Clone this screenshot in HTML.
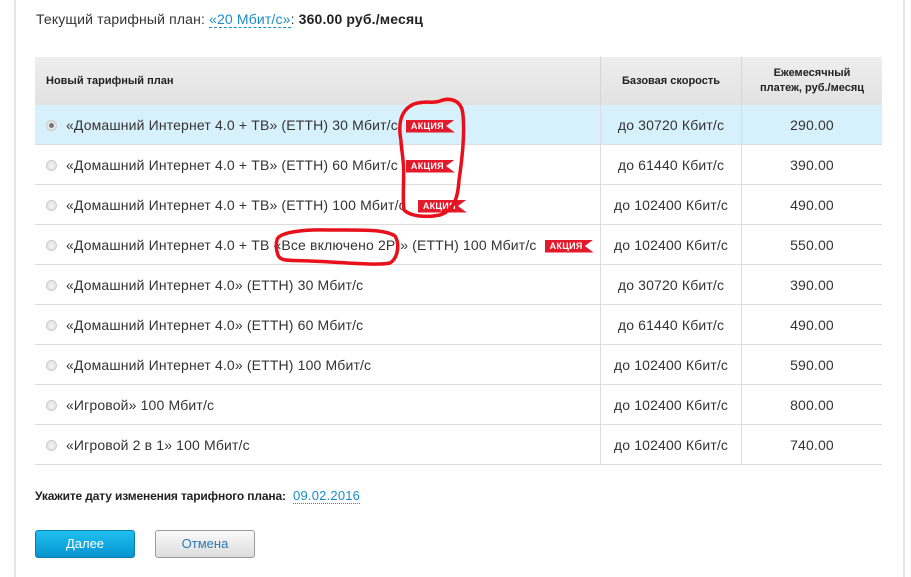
<!DOCTYPE html>
<html><head><meta charset="utf-8"><style>
body{margin:0;width:911px;height:577px;background:#fff;font-family:"Liberation Sans",sans-serif;position:relative;overflow:hidden;color:#333}
.vl{position:absolute;left:14px;top:0;width:2px;height:577px;background:#e6e6e6}
.vr{position:absolute;left:903px;top:0;width:2px;height:577px;background:#e6e6e6}
.top{position:absolute;left:36px;top:11px;font-size:14px;color:#333;letter-spacing:0.15px}
.top a{color:#1a8ccc;border-bottom:1px dashed #1a8ccc;text-decoration:none}
table{position:absolute;left:35px;top:57px;border-collapse:collapse;width:847px}
th{background:linear-gradient(#eee,#e2e2e2);font-size:11px;font-weight:bold;color:#222;height:48px;border-right:1px solid #d6d6d6;padding:0;line-height:15px}
th:last-child{border-right:none}
td{height:39px;border-bottom:1px solid #ddd;border-right:1px solid #ddd;font-size:14px;padding:0;color:#333;letter-spacing:0.15px}
td:last-child{border-right:none}
tr.sel td{background:#d7f1fc}
td.n{padding-left:11px;white-space:nowrap}
td.c{text-align:center}
.r{display:inline-block;width:11px;height:11px;border-radius:50%;background:radial-gradient(#f4f4f4,#ddd);border:1px solid #ccc;vertical-align:-1px;margin-right:9px;box-sizing:border-box;position:relative}
.sel .r::after{content:"";position:absolute;left:2px;top:2px;width:5px;height:5px;border-radius:50%;background:#777}
.ak{display:inline-block;background:#e3192c;color:#fff;font-size:9px;font-weight:bold;height:13px;line-height:13px;padding:0 11px 0 5px;vertical-align:1px;letter-spacing:0.3px;clip-path:polygon(0 0,100% 0,82% 50%,100% 100%,0 100%)}
.date{position:absolute;left:35px;top:488px;font-size:12px;font-weight:bold;color:#222;letter-spacing:-0.15px}
.date a{font-weight:normal;color:#1a8ccc;border-bottom:1px dotted #1a8ccc;margin-left:4px;font-size:13px;letter-spacing:0.2px}
.b1{position:absolute;left:35px;top:530px;width:98px;height:26px;border:1px solid #0a7bb0;border-radius:3px;background:linear-gradient(#1fc0ef,#0694cf);color:#fff;font-size:13px;text-align:center;line-height:26px}
.b2{position:absolute;left:155px;top:530px;width:98px;height:26px;border:1px solid #999;border-radius:3px;background:linear-gradient(#fafafa,#ddd);color:#2a7ab0;font-size:13px;text-align:center;line-height:26px}
svg{position:absolute;left:0;top:0}
</style></head><body>
<div class="vl"></div><div class="vr"></div>
<div class="top">Текущий тарифный план: <a>«20 Мбит/с»</a>: <b style="color:#222">360.00 руб./месяц</b></div>
<table>
<tr><th style="text-align:left;padding-left:11px;width:554px">Новый тарифный план</th><th style="width:140px">Базовая скорость</th><th>Ежемесячный<br>платеж, руб./месяц</th></tr>
<tr class="sel"><td class="n"><span class="r"></span>«Домашний Интернет 4.0 + ТВ» (ЕТТН) 30 Мбит/с <span class="ak" style="margin-left:4px">АКЦИЯ</span></td><td class="c">до 30720 Кбит/с</td><td class="c">290.00</td></tr>
<tr><td class="n"><span class="r"></span>«Домашний Интернет 4.0 + ТВ» (ЕТТН) 60 Мбит/с <span class="ak" style="margin-left:4px">АКЦИЯ</span></td><td class="c">до 61440 Кбит/с</td><td class="c">390.00</td></tr>
<tr><td class="n"><span class="r"></span>«Домашний Интернет 4.0 + ТВ» (ЕТТН) 100 Мбит/с <span class="ak" style="margin-left:8px">АКЦИЯ</span></td><td class="c">до 102400 Кбит/с</td><td class="c">490.00</td></tr>
<tr><td class="n"><span class="r"></span>«Домашний Интернет 4.0 + ТВ «Все включено 2Р)» (ЕТТН) 100 Мбит/с &nbsp;<span class="ak">АКЦИЯ</span></td><td class="c">до 102400 Кбит/с</td><td class="c">550.00</td></tr>
<tr><td class="n"><span class="r"></span>«Домашний Интернет 4.0» (ЕТТН) 30 Мбит/с</td><td class="c">до 30720 Кбит/с</td><td class="c">390.00</td></tr>
<tr><td class="n"><span class="r"></span>«Домашний Интернет 4.0» (ЕТТН) 60 Мбит/с</td><td class="c">до 61440 Кбит/с</td><td class="c">490.00</td></tr>
<tr><td class="n"><span class="r"></span>«Домашний Интернет 4.0» (ЕТТН) 100 Мбит/с</td><td class="c">до 102400 Кбит/с</td><td class="c">590.00</td></tr>
<tr><td class="n"><span class="r"></span>«Игровой» 100 Мбит/с</td><td class="c">до 102400 Кбит/с</td><td class="c">800.00</td></tr>
<tr><td class="n"><span class="r"></span>«Игровой 2 в 1» 100 Мбит/с</td><td class="c">до 102400 Кбит/с</td><td class="c">740.00</td></tr>
</table>
<div class="date">Укажите дату изменения тарифного плана: <a>09.02.2016</a></div>
<div class="b1">Далее</div><div class="b2">Отмена</div>
<svg width="911" height="577" fill="none" stroke="#e8101a" stroke-width="3.5" stroke-linecap="round" stroke-linejoin="round">
<path d="M401 141 C398 125 400 110 414 104 C425 100 432 104 440 101 C450 97 462 100 463 115 C465 135 462 160 459 180 C458 196 455 210 440 215 C425 218 410 216 404 210 C402 195 405 175 403 160 C402 150 401 145 401 141"/>
<path d="M277 240 C278 233 300 229 330 230 C360 230 385 229 395 236 C400 244 398 258 390 263 C375 266 340 262 310 261 C292 260 280 262 278 255 C276 250 276 244 277 240"/>
</svg>
</body></html>
